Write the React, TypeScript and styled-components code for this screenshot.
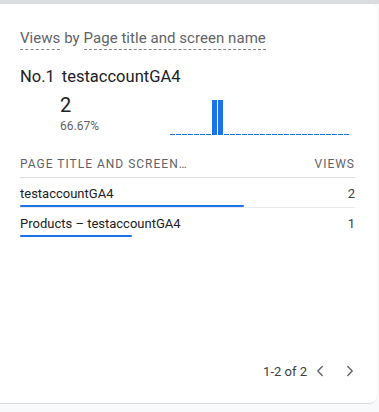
import React from "react";
import styled, { createGlobalStyle } from "styled-components";
import { ChevronLeft, ChevronRight } from "lucide-react";

const Global = createGlobalStyle`
  html, body { margin: 0; padding: 0; }
  body {
    background: #f8f9fa;
    font-family: Roboto, "Noto Sans", Arial, sans-serif;
    width: 379px;
    height: 412px;
    overflow: hidden;
  }
`;

const Page = styled.div`
  display: flex;
  flex-direction: column;
  width: 379px;
  height: 412px;
  background: #f8f9fa;
`;

const Strip = styled.div`
  height: 4px;
  flex: none;
  background: #dadce0;
`;

const Card = styled.div`
  width: 377px;
  height: 400px;
  background: #ffffff;
  border-radius: 0 8px 8px 0;
  border-bottom: 1px solid #dadce0;
  box-sizing: border-box;
  display: flex;
  flex-direction: column;
  padding: 0 22px 0 20px;
`;

const Bottom = styled.div`
  flex: 1;
  background: #f8f9fa;
`;

const Title = styled.div`
  margin-top: 24px;
  font-size: 15px;
  line-height: 20px;
  color: #5f6368;
  letter-spacing: 0.05px;
`;

const Dashed = styled.span`
  border-bottom: 1px dashed #80868b;
  padding-bottom: 2px;
`;

const Headline = styled.div`
  margin-top: 19px;
  font-size: 16.5px;
  line-height: 20px;
  color: #202124;
  display: flex;
  gap: 7px;
`;

const MetricRow = styled.div`
  display: flex;
  align-items: flex-end;
  margin-top: 5px;
`;

const MetricCol = styled.div`
  margin-left: 40px;
  width: 110px;
  display: flex;
  flex-direction: column;
`;

const BigValue = styled.div`
  font-size: 20px;
  line-height: 26px;
  color: #202124;
`;

const Percent = styled.div`
  font-size: 12px;
  line-height: 16px;
  color: #5f6368;
  margin-bottom: 2px;
`;

const Chart = styled.div`
  display: flex;
  align-items: flex-end;
  gap: 1px;
  height: 36px;
  margin-bottom: 1px;
`;

const Bar = styled.div`
  width: 5px;
  background: #1a73e8;
`;

const Header = styled.div`
  margin-top: 20px;
  display: flex;
  justify-content: space-between;
  font-size: 12px;
  line-height: 16px;
  letter-spacing: 1px;
  text-transform: uppercase;
  color: #5f6368;
  padding-bottom: 5px;
  border-bottom: 1px solid #dadce0;
`;

const Row = styled.div<{ $last?: boolean }>`
  padding-top: 8px;
  border-bottom: ${(p) => (p.$last ? "none" : "1px solid #e8eaed")};
  display: flex;
  flex-direction: column;
`;

const RowLine = styled.div`
  display: flex;
  justify-content: space-between;
  font-size: 13px;
  line-height: 16px;
  color: #202124;
`;

const Value = styled.span`
  color: #3c4043;
`;

const Meter = styled.div`
  margin-top: 3px;
  height: 2px;
  background: #1a73e8;
  border-radius: 1px;
`;

const Footer = styled.div`
  margin-top: auto;
  margin-bottom: 20px;
  margin-right: -7px;
  display: flex;
  align-items: center;
  justify-content: flex-end;
  font-size: 13px;
  color: #3c4043;
  gap: 6px;
`;

const PageText = styled.span`
  margin-right: -5px;
`;

const IconBtn = styled.span`
  width: 24px;
  height: 24px;
  display: flex;
  align-items: center;
  justify-content: center;
  color: #5f6368;
`;

const bars = Array.from({ length: 30 }, (_, i) => (i === 7 || i === 8 ? 35 : 1));

const rows = [
  { name: "testaccountGA4", value: 2 },
  { name: "Products – testaccountGA4", value: 1 },
];

export default function App() {
  const max = 2;
  const full = 224;
  return (
    <>
      <Global />
      <Page>
        <Strip />
        <Card>
          <Title>
            <Dashed>Views</Dashed> by <Dashed>Page title and screen name</Dashed>
          </Title>
          <Headline>
            <span>No.1</span>
            <span>testaccountGA4</span>
          </Headline>
          <MetricRow>
            <MetricCol>
              <BigValue>2</BigValue>
              <Percent>66.67%</Percent>
            </MetricCol>
            <Chart>
              {bars.map((h, i) => (
                <Bar key={i} style={{ height: h }} />
              ))}
            </Chart>
          </MetricRow>
          <Header>
            <span>Page title and screen…</span>
            <span>Views</span>
          </Header>
          {rows.map((r, i) => (
            <Row key={r.name} $last={i === rows.length - 1}>
              <RowLine>
                <span>{r.name}</span>
                <Value>{r.value}</Value>
              </RowLine>
              <Meter style={{ width: (r.value / max) * full }} />
            </Row>
          ))}
          <Footer>
            <PageText>1-2 of 2</PageText>
            <IconBtn>
              <ChevronLeft size={18} strokeWidth={1.8} />
            </IconBtn>
            <IconBtn>
              <ChevronRight size={18} strokeWidth={1.8} />
            </IconBtn>
          </Footer>
        </Card>
        <Bottom />
      </Page>
    </>
  );
}
